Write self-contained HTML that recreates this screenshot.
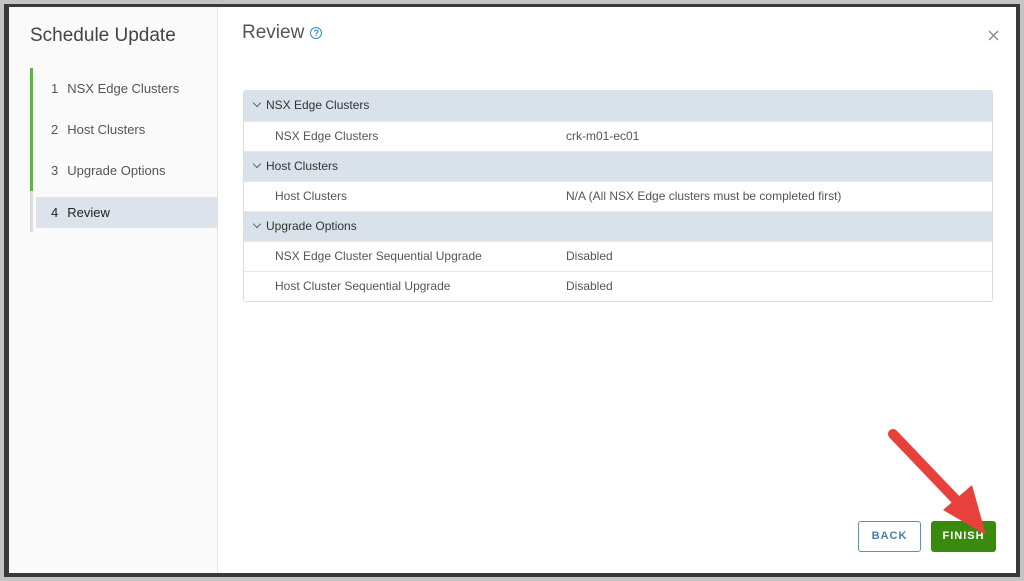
<!DOCTYPE html>
<html><head><style>
*{margin:0;padding:0;box-sizing:border-box}
body{width:1024px;height:581px;background:#c4c4c4;position:relative;overflow:hidden;font-family:"Liberation Sans",sans-serif;}
.frame{position:absolute;left:4px;top:4px;width:1016px;height:573px;background:#3a3a3a;}
.modal{position:absolute;left:9px;top:7px;width:1007px;height:566px;background:#fff;}
.left{position:absolute;left:0;top:0;width:209px;height:566px;background:#fafafa;border-right:1px solid #e4e4e4;}
.title{position:absolute;left:21px;top:18px;font-size:19px;color:#444;}
.bar{position:absolute;left:21px;top:61px;width:3px;height:164px;background:#ddd;}
.bar i{display:block;width:3px;height:123px;background:#5cb83a;}
.step{position:absolute;left:42px;font-size:13px;color:#555;}
.step b{font-weight:normal;margin-right:9px}
.active{position:absolute;left:27px;top:190px;width:182px;height:31px;background:#dce3ea;}
.h{position:absolute;left:233px;top:15px;font-size:19px;color:#555;}
.q{display:inline-block;width:12px;height:12px;border:1.5px solid #2d8fc5;border-radius:50%;font-size:9px;color:#2d8fc5;text-align:center;line-height:10px;vertical-align:middle;margin-left:6px;font-weight:bold}
.tbl{position:absolute;left:234px;top:83px;width:750px;border:1px solid #ddd;border-radius:3px;overflow:hidden}
.r{height:30px;line-height:28px;font-size:12px;position:relative;border-top:1px solid #e6e6e6}
.r:first-child{border-top:none}
.g{background:#d9e2ea;color:#333;padding-left:22px}
.g:before{content:"";position:absolute;left:10px;top:9px;width:5px;height:5px;border-right:1px solid #666;border-bottom:1px solid #666;transform:rotate(45deg)}
.d{color:#555;padding-left:31px}
.d span{position:absolute;left:322px}
.btn{position:absolute;top:514px;height:31px;font-size:11px;font-weight:bold;letter-spacing:1px;text-align:center;line-height:31px;border-radius:3px}
</style></head><body>
<div class="frame"></div>
<div class="modal">
 <div class="left">
  <div class="title">Schedule Update</div>
  <div class="bar"><i></i></div>
  <div class="active"></div>
  <div class="step" style="top:74px"><b>1</b>NSX Edge Clusters</div>
  <div class="step" style="top:115px"><b>2</b>Host Clusters</div>
  <div class="step" style="top:156px"><b>3</b>Upgrade Options</div>
  <div class="step" style="top:198px;color:#222"><b>4</b>Review</div>
 </div>
 <div class="h">Review<span class="q">?</span></div>
 <div class="tbl">
  <div class="r g">NSX Edge Clusters</div>
  <div class="r d">NSX Edge Clusters<span>crk-m01-ec01</span></div>
  <div class="r g">Host Clusters</div>
  <div class="r d">Host Clusters<span>N/A (All NSX Edge clusters must be completed first)</span></div>
  <div class="r g">Upgrade Options</div>
  <div class="r d">NSX Edge Cluster Sequential Upgrade<span>Disabled</span></div>
  <div class="r d">Host Cluster Sequential Upgrade<span>Disabled</span></div>
 </div>
 <div class="btn" style="left:849px;width:63px;border:1px solid #4a95c5;color:#4a7fa8;background:#fff;line-height:29px">BACK</div>
 <div class="btn" style="left:922px;width:65px;background:#3a8a0e;color:#fff">FINISH</div>
</div>
<svg style="position:absolute;left:0;top:0" width="1024" height="581">
 <path d="M989 31L998 40M998 31L989 40" stroke="#888" stroke-width="1.3"/>
 <line x1="893" y1="434" x2="958" y2="502" stroke="#e8413c" stroke-width="10" stroke-linecap="round"/>
 <polygon points="943,510 972,485 986,535" fill="#e8413c"/>
</svg>
</body></html>
